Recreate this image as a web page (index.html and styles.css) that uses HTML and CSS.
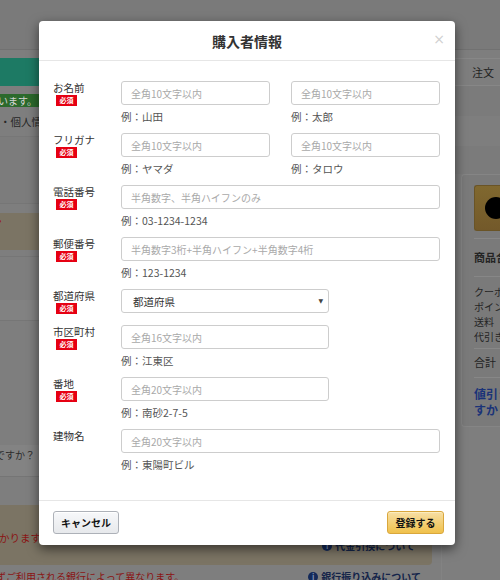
FILE: index.html
```html
<!DOCTYPE html>
<html lang="ja">
<head>
<meta charset="utf-8">
<title>購入者情報</title>
<link rel="stylesheet" href="styles.css">
</head>
<body>
<div class="page">
  <div class="topbar"></div>
  <div class="main">
    <div class="gap8"></div>
    <div class="teal"></div>
    <div class="gap8"></div>
    <div class="notice">ています。</div>
    <div class="info">・個人情報</div>
    <div class="band1"></div>
    <div class="gap10"></div>
    <div class="tan1"><span class="reddot">•</span></div>
    <div class="gray50"></div>
    <div class="light20"></div>
    <div class="gray124"></div>
    <div class="q-band">ですか？</div>
    <div class="gray28"></div>
    <div class="tan2">
      <div class="tan2-row">
        <span class="red-text">かります。</span>
        <span class="link link-a"><span class="info-ico">i</span>代金引換について</span>
      </div>
    </div>
    <div class="bottom-row">
      <span class="red-text">ずご利用される銀行によって異なります。</span>
      <span class="link link-b"><span class="info-ico">i</span>銀行振り込みについて</span>
    </div>
  </div>
  <div class="side">
    <div class="side-gap"></div>
    <div class="side-tab">注文</div>
    <div class="side-bands"></div>
    <div class="card">
      <div class="gold"><span class="gold-dot"></span></div>
      <div class="card-sub">商品合</div>
      <div class="card-list">
        <div>クーポ</div>
        <div>ポイン</div>
        <div>送料</div>
        <div>代引き</div>
      </div>
      <div class="card-total">合計（</div>
      <div class="card-blue">値引き<br>すか？</div>
    </div>
  </div>
</div>

<div class="modal">
  <div class="modal-header">
    <h2 class="modal-title">購入者情報</h2>
    <span class="close">×</span>
  </div>
  <div class="modal-body">
    <div class="row">
      <div class="label">お名前<span class="req">必須</span></div>
      <div class="field">
        <div class="pair">
          <div class="col"><input class="inp" placeholder="全角10文字以内"><div class="example">例：山田</div></div>
          <div class="col"><input class="inp" placeholder="全角10文字以内"><div class="example">例：太郎</div></div>
        </div>
      </div>
    </div>
    <div class="row">
      <div class="label">フリガナ<span class="req">必須</span></div>
      <div class="field">
        <div class="pair">
          <div class="col"><input class="inp" placeholder="全角10文字以内"><div class="example">例：ヤマダ</div></div>
          <div class="col"><input class="inp" placeholder="全角10文字以内"><div class="example">例：タロウ</div></div>
        </div>
      </div>
    </div>
    <div class="row">
      <div class="label">電話番号<span class="req">必須</span></div>
      <div class="field">
        <input class="inp full" placeholder="半角数字、半角ハイフンのみ">
        <div class="example">例：03-1234-1234</div>
      </div>
    </div>
    <div class="row">
      <div class="label">郵便番号<span class="req">必須</span></div>
      <div class="field">
        <input class="inp full" placeholder="半角数字3桁+半角ハイフン+半角数字4桁">
        <div class="example">例：123-1234</div>
      </div>
    </div>
    <div class="row row-select">
      <div class="label">都道府県<span class="req">必須</span></div>
      <div class="field">
        <div class="select-wrap">
          <select class="sel"><option>都道府県</option></select>
          <span class="arrow">▼</span>
        </div>
      </div>
    </div>
    <div class="row">
      <div class="label">市区町村<span class="req">必須</span></div>
      <div class="field">
        <input class="inp mid" placeholder="全角16文字以内">
        <div class="example">例：江東区</div>
      </div>
    </div>
    <div class="row">
      <div class="label">番地<span class="req">必須</span></div>
      <div class="field">
        <input class="inp mid" placeholder="全角20文字以内">
        <div class="example">例：南砂2-7-5</div>
      </div>
    </div>
    <div class="row">
      <div class="label">建物名</div>
      <div class="field">
        <input class="inp full" placeholder="全角20文字以内">
        <div class="example">例：東陽町ビル</div>
      </div>
    </div>
  </div>
  <div class="modal-footer">
    <button class="btn btn-cancel">キャンセル</button>
    <button class="btn btn-submit">登録する</button>
  </div>
</div>
</body>
</html>
```

FILE: styles.css
```css
html, body {
  margin: 0;
  padding: 0;
}
body {
  width: 500px;
  height: 580px;
  overflow: hidden;
  background: #7e7e7e;
  font-family: "Noto Sans CJK JP", "Noto Sans", sans-serif;
  position: relative;
}

/* ---------- dimmed background page ---------- */
.page {
  display: grid;
  grid-template-columns: 441px 59px;
  grid-template-rows: 50px auto;
  width: 500px;
  height: 580px;
  overflow: hidden;
}
.topbar {
  grid-column: 1 / 3;
  background: #7a7a7a;
  border-bottom: 1px solid #717171;
  box-sizing: border-box;
}
.main {
  overflow: hidden;
  font-size: 11px;
}
.gap8 { height: 8px; }
.gap10 { height: 10px; border-top: 1px solid #767676; box-sizing: border-box; }
.teal { height: 28px; background: #1d7a64; }
.notice {
  height: 13px;
  line-height: 13px;
  background: #2c6a2c;
  color: #d4d4d4;
  font-size: 10px;
  white-space: nowrap;
  text-indent: -12px;
}
.info {
  height: 30px;
  box-sizing: border-box;
  padding-top: 7px;
  line-height: 15px;
  color: #262626;
  font-size: 10.5px;
  white-space: nowrap;
  border-bottom: 1px solid #777;
}
.band1 { height: 66px; background: #7c7c7c; }
.tan1 {
  height: 37px;
  background: #7b7464;
  line-height: 12px;
  color: #8f2020;
}
.reddot { font-size: 10px; margin-left: -2px; }
.gray50 { height: 50px; border-top: 1px solid #767676; box-sizing: border-box; margin-top: 6px; }
.light20 { height: 20px; background: #828282; border-bottom: 1px solid #767676; margin-top: -6px; }
.gray124 { height: 124px; }
.q-band {
  height: 31px;
  line-height: 20px;
  background: #838383;
  color: #2c2c2c;
  font-size: 10px;
  border-bottom: 1px solid #757575;
  white-space: nowrap;
  text-indent: -5px;
}
.gray28 { height: 28px; }
.tan2 {
  width: 432px;
  height: 60px;
  box-sizing: border-box;
  background: #7b7464;
  border-radius: 0 4px 4px 0;
  padding-top: 25px;
}
.tan2-row {
  display: flex;
  justify-content: space-between;
  align-items: flex-start;
  padding-right: 17px;
}
.red-text {
  color: #8a1414;
  font-size: 10px;
  line-height: 15px;
  white-space: nowrap;
}
.tan2-row .red-text { font-size: 10.5px; margin-left: -1px; }
.link {
  display: inline-flex;
  align-items: center;
  gap: 3px;
  color: #14244a;
  font-size: 10px;
  font-weight: bold;
  line-height: 14px;
  white-space: nowrap;
}
.link-a { margin-top: 9px; }
.info-ico {
  width: 10px;
  height: 10px;
  border-radius: 50%;
  background: #142a5a;
  color: #8090b0;
  font-size: 8px;
  line-height: 10px;
  text-align: center;
  font-weight: bold;
}
.bottom-row {
  display: flex;
  justify-content: space-between;
  padding-top: 4px;
  padding-right: 20px;
  margin-left: -4px;
}
.bottom-row .link { margin-top: 1px; }

.side {
  overflow: hidden;
  border-left: 1px solid #838383;
  font-size: 10px;
  color: #242424;
}
.side-gap { height: 8px; }
.side-tab {
  height: 28px;
  box-sizing: border-box;
  border-top: 1px solid #878787;
  border-bottom: 1px solid #878787;
  line-height: 26px;
  padding-left: 30px;
  font-size: 11px;
  white-space: nowrap;
}
.side-bands {
  height: 88px;
  background: linear-gradient(#7b7b7b 0 30px, #7e7e7e 30px 60px, #7b7b7b 60px);
}
.card {
  margin-left: 19px;
  height: 253px;
  background: #7a7a7a;
  border: 1px solid #858585;
  border-right: none;
  border-radius: 4px 0 0 4px;
  padding: 10px 0 0 12px;
  box-sizing: border-box;
  white-space: nowrap;
}
.gold {
  height: 44px;
  background: linear-gradient(#80682f, #73592a);
  border: 1px solid #6a5426;
  border-right: none;
  border-radius: 3px 0 0 3px;
  display: flex;
  align-items: center;
  padding-left: 10px;
}
.gold-dot {
  width: 22px;
  height: 22px;
  border-radius: 50%;
  background: #000;
  flex: none;
}
.card-sub {
  margin-top: 7px;
  border-top: 1px solid #878787;
  border-bottom: 1px solid #878787;
  height: 37px;
  line-height: 36px;
  font-size: 11px;
  font-weight: bold;
}
.card-list {
  padding: 7px 0 4px;
  line-height: 15px;
  border-bottom: 1px solid #878787;
}
.card-total {
  height: 28px;
  line-height: 27px;
  font-size: 11px;
  border-bottom: 1px solid #878787;
}
.card-blue {
  padding-top: 8px;
  color: #1a3378;
  font-weight: bold;
  font-size: 12px;
  line-height: 16px;
}

/* ---------- modal ---------- */
.modal {
  position: absolute;
  left: 39px;
  top: 21px;
  width: 416px;
  background: #fff;
  border-radius: 4px;
  box-shadow: 0 4px 12px rgba(0, 0, 0, 0.55);
  color: #333;
}
.modal-header {
  height: 40px;
  box-sizing: border-box;
  border-bottom: 1px solid #e6e6e6;
  display: flex;
  align-items: center;
  justify-content: center;
  position: relative;
}
.modal-title {
  margin: 0;
  font-size: 14px;
  font-weight: bold;
  color: #333;
  line-height: 20px;
}
.close {
  position: absolute;
  right: 10px;
  top: 10px;
  font-size: 14px;
  line-height: 16px;
  color: #d0d0d0;
  font-family: "DejaVu Sans", sans-serif;
}
.modal-body {
  padding: 20px 15px 19px 14px;
}
.row {
  display: grid;
  grid-template-columns: 68px 319px;
  margin-bottom: 8px;
}
.row-select { margin-bottom: 11px; }
.label {
  font-size: 10.5px;
  line-height: 14px;
  color: #333;
}
.req {
  display: block;
  width: 21px;
  height: 11px;
  margin: 0 0 0 3px;
  background: #e60012;
  color: #fff;
  font-size: 7px;
  font-weight: bold;
  line-height: 11px;
  text-align: center;
}
.pair {
  display: flex;
  gap: 21px;
}
.col {
  width: 149px;
}
.inp {
  display: block;
  box-sizing: border-box;
  width: 149px;
  height: 24px;
  margin: 0;
  border: 1px solid #cdcdcd;
  border-radius: 3px;
  padding: 0 9px;
  font-family: "Noto Sans CJK JP", sans-serif;
  font-size: 10px;
  color: #333;
  background: #fff;
  outline: none;
}
.inp::placeholder { color: #a9a9a9; }
.inp.full { width: 319px; }
.inp.mid { width: 208px; }
.example {
  margin-top: 3px;
  font-size: 10.5px;
  line-height: 17px;
  color: #555;
}
.select-wrap {
  position: relative;
  width: 208px;
}
.sel {
  display: block;
  width: 208px;
  height: 24px;
  box-sizing: border-box;
  border: 1px solid #cdcdcd;
  border-radius: 3px;
  padding: 0 11px;
  font-family: "Noto Sans CJK JP", sans-serif;
  font-size: 10.5px;
  color: #333;
  background: #fff;
  appearance: none;
  -webkit-appearance: none;
  outline: none;
}
.arrow {
  position: absolute;
  right: 6px;
  top: 8px;
  font-size: 6px;
  line-height: 8px;
  color: #444;
  font-family: "DejaVu Sans", sans-serif;
}
.modal-footer {
  border-top: 1px solid #e6e6e6;
  padding: 10px 11px 11px 14px;
  display: flex;
  justify-content: space-between;
  align-items: center;
}
.btn {
  height: 23px;
  box-sizing: border-box;
  border-radius: 3px;
  font-family: "Noto Sans CJK JP", sans-serif;
  font-size: 10px;
  font-weight: bold;
  padding: 0;
  line-height: 21px;
  color: #111;
}
.btn-cancel {
  width: 66px;
  border: 1px solid #adb1b8;
  background: linear-gradient(#f7f8fa, #e7e9ec);
  box-shadow: inset 0 1px 0 #fff;
}
.btn-submit {
  width: 57px;
  border: 1px solid #d9a73d;
  background: linear-gradient(#f7dfa5, #f0c14b);
  box-shadow: inset 0 1px 0 #fcecbd;
}
```
